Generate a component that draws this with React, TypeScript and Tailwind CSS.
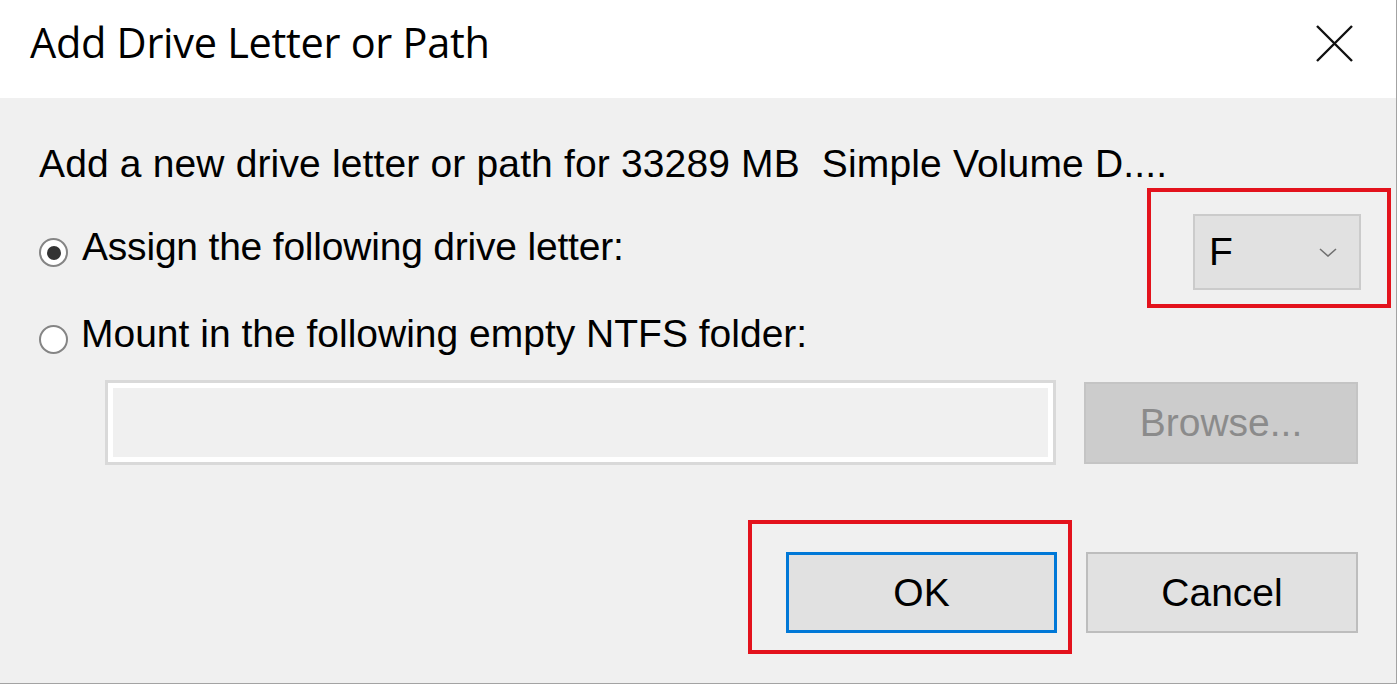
import { ReactNode } from "react";

interface IRadio {
    checked?: boolean;
}

const Radio = ({ checked }: IRadio) => {
    return (
        <span className="w-[29px] h-[29px] shrink-0 rounded-full border-[2px] border-[#858585] bg-white flex items-center justify-center">
            {checked && <span className="w-[14px] h-[14px] rounded-full bg-[#333333]" />}
        </span>
    );
};

interface IMarked {
    children: ReactNode;
    box: string;
}

// red annotation frame drawn over a control
const Marked = ({ children, box }: IMarked) => {
    return (
        <div className="relative">
            {children}
            <div className={`absolute border-[4px] border-[#e3121c] pointer-events-none ${box}`} />
        </div>
    );
};

const App = () => {
    return (
        <div className="w-[1397px] h-[684px] flex flex-col bg-[#f0f0f0] border-r border-b border-[#a3a3a3] text-black font-['Liberation_Sans',Arial,sans-serif]">
            <div className="h-[98px] shrink-0 bg-white flex items-start justify-between pl-[30px] pr-[43px]">
                <span className="mt-[19px] text-[41.5px] leading-[46px] font-['Open_Sans',sans-serif] tracking-[-0.3px]">
                    Add Drive Letter or Path
                </span>
                <svg className="mt-[25px]" width="37" height="37" viewBox="0 0 37 37">
                    <path d="M1 1 L36 36 M36 1 L1 36" stroke="#111" strokeWidth="2.4" fill="none" />
                </svg>
            </div>

            <div className="flex-1 flex flex-col pt-[43px] pl-[39px] pr-[38px] text-[39px] leading-[46px]">
                <div className="whitespace-pre tracking-[0.15px]">Add a new drive letter or path for 33289 MB  Simple Volume D....</div>

                <div className="mt-[27px] h-[76px] flex items-start justify-between">
                    <div className="flex items-start gap-[14px]">
                        <div className="mt-[24px]">
                            <Radio checked />
                        </div>
                        <span className="mt-[10px] tracking-[-0.2px]">Assign the following drive letter:</span>
                    </div>
                    <div className="-mr-[3px]">
                        <Marked box="-left-[46px] -top-[26px] -right-[30px] -bottom-[18px]">
                            <div className="w-[168px] h-[76px] bg-[#e1e1e1] border-2 border-[#cbcbcb] flex items-center justify-between pl-[14px] pr-[22px]">
                                <span>F</span>
                                <svg width="18" height="9" viewBox="0 0 18 9">
                                    <path d="M1 1 L9 8 L17 1" stroke="#707070" strokeWidth="1.6" fill="none" />
                                </svg>
                            </div>
                        </Marked>
                    </div>
                </div>

                <div className="mt-[21px] flex items-start gap-[13px]">
                    <div className="mt-[14px]">
                        <Radio />
                    </div>
                    <span>Mount in the following empty NTFS folder:</span>
                </div>

                <div className="mt-[23px] ml-[66px] flex items-start gap-[28px]">
                    <div className="flex-1 h-[85px] border-[3px] border-[#d9d9d9] p-0">
                        <div className="w-full h-full border-[5px] border-white bg-[#f0f0f0]" />
                    </div>
                    <button className="mt-[2px] w-[274px] h-[82px] bg-[#cccccc] border-2 border-[#c4c4c4] text-[#8b8b8b]">
                        Browse...
                    </button>
                </div>

                <div className="mt-[87px] flex justify-end gap-[29px]">
                    <Marked box="-left-[38px] -top-[32px] -right-[15px] -bottom-[21px]">
                        <button className="w-[271px] h-[81px] bg-[#e1e1e1] border-[3px] border-[#0078d7]">OK</button>
                    </Marked>
                    <button className="w-[272px] h-[81px] bg-[#e1e1e1] border-2 border-[#bdbdbd]">Cancel</button>
                </div>
            </div>
        </div>
    );
};

export default App;
